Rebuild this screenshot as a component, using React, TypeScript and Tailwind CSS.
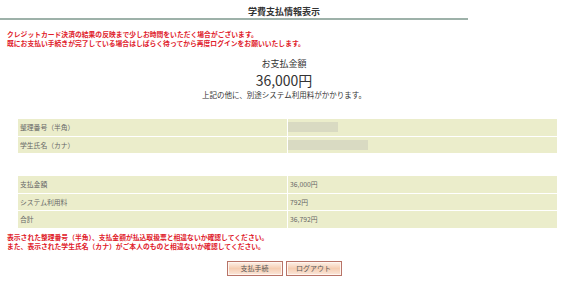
import React from 'react'

const font = { fontFamily: '"Noto Sans CJK JP", "Noto Sans", sans-serif' }

function InfoTable({ rows }: { rows: { label: string; value?: React.ReactNode }[] }) {
  return (
    <div className="ml-[17px] w-[541px] bg-white grid grid-cols-[269px_1fr] gap-px p-px">
      {rows.map((r) => (
        <React.Fragment key={r.label}>
          <div className="h-[16.5px] bg-[#ebedcb] pl-[2px] flex items-center text-[6.8px] text-[#666]">
            {r.label}
          </div>
          <div className="h-[16.5px] bg-[#ebedcb] flex items-center text-[6.8px] text-[#666]">
            {r.value}
          </div>
        </React.Fragment>
      ))}
    </div>
  )
}

function Blur({ w }: { w: string }) {
  return <div className={`h-[10px] ${w} bg-[#d9dac2] blur-[0.6px]`} />
}

export default function App() {
  return (
    <div className="w-[580px] h-[294px] bg-white overflow-hidden" style={font}>
      {/* Header */}
      <div className="w-[568px] pt-[6px] text-center text-[9px] font-bold leading-[11px] text-[#333]">
        学費支払情報表示
      </div>
      <div className="w-[468px] h-[2px] mt-[1px] bg-[#9db1a9]" />

      {/* Notice */}
      <div className="mt-[10px] pl-[7px] text-[6.8px] leading-[9px] font-bold text-[#e0202a]">
        <p>クレジットカード決済の結果の反映まで少しお時間をいただく場合がございます。</p>
        <p>既にお支払い手続きが完了している場合はしばらく待ってから再度ログインをお願いいたします。</p>
      </div>

      {/* Amount */}
      <div className="w-[568px] mt-[10px] flex flex-col items-center text-[#333]">
        <div className="text-[9px] leading-[12px]">お支払金額</div>
        <div className="text-[14px] leading-[17px] mt-[2px]">36,000円</div>
        <div className="text-[7.5px] leading-[10px] mt-[1px]">上記の他に、別途システム利用料がかかります。</div>
      </div>

      <div className="mt-[18px]">
        <InfoTable
          rows={[
            { label: '整理番号（半角）', value: <Blur w="w-[50px]" /> },
            { label: '学生氏名（カナ）', value: <Blur w="w-[80px]" /> },
          ]}
        />
      </div>

      <div className="mt-[21px]">
        <InfoTable
          rows={[
            { label: '支払金額', value: <span className="pl-[2px]">36,000円</span> },
            { label: 'システム利用料', value: <span className="pl-[2px]">792円</span> },
            { label: '合計', value: <span className="pl-[2px]">36,792円</span> },
          ]}
        />
      </div>

      {/* Confirmation */}
      <div className="mt-[4px] pl-[7px] text-[6.8px] leading-[9px] font-bold text-[#e0202a]">
        <p>表示された整理番号（半角）、支払金額が払込取扱票と相違ないか確認してください。</p>
        <p>また、表示された学生氏名（カナ）がご本人のものと相違ないか確認してください。</p>
      </div>

      <div className="w-[568px] mt-[10px] flex justify-center gap-[3px]">
        {['支払手続', 'ログアウト'].map((t) => (
          <button
            key={t}
            className="w-[56px] h-[15px] border border-[#b87468] bg-gradient-to-b from-[#fdf1e8] via-[#f5cdb2] to-[#fbe7da] shadow-[inset_0_0_0_1px_#fff6f0] text-[7px] text-[#555] flex items-center justify-center"
          >
            {t}
          </button>
        ))}
      </div>
    </div>
  )
}
